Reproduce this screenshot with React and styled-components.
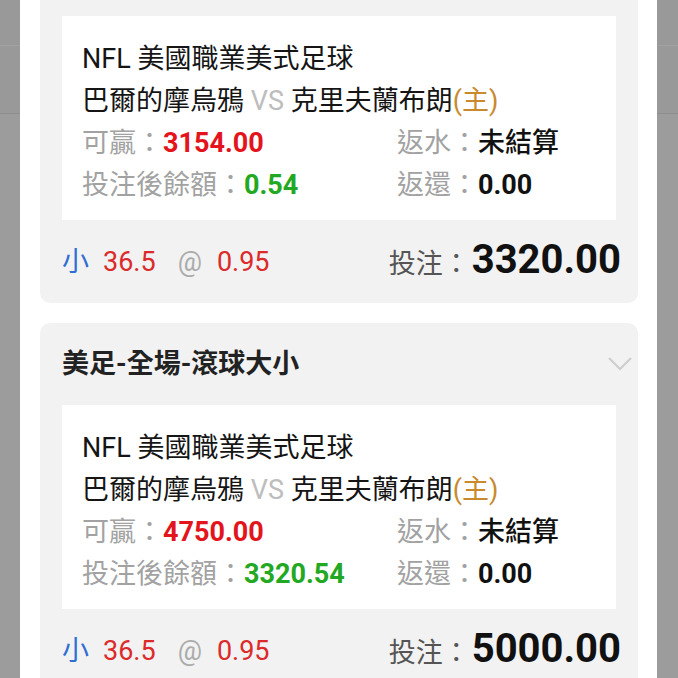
import React from "react";
import styled, { createGlobalStyle } from "styled-components";

const GlobalStyle = createGlobalStyle`
  html, body {
    margin: 0;
    padding: 0;
    height: 678px;
    overflow: hidden;
  }
  body {
    font-family: Roboto, "Noto Sans CJK TC", "Noto Sans", sans-serif;
  }
`;

const bets = [
  { market: "美足-全場-滾球大小", win: "3154.00", balance: "0.54", stake: "3320.00" },
  { market: "美足-全場-滾球大小", win: "4750.00", balance: "3320.54", stake: "5000.00" },
];

const App = () => (
  <>
    <GlobalStyle />
    <Backdrop>
      <Side />
      <Sheet>
        <List>
          {bets.map((bet, i) => (
            <BetCard key={i} bet={bet} />
          ))}
        </List>
      </Sheet>
      <Side />
    </Backdrop>
  </>
);
export default App;

const BetCard = ({ bet }) => (
  <Card>
    <CardHeader>
      <span>{bet.market}</span>
      <svg width="24" height="14" viewBox="0 0 24 14">
        <polyline points="1,1 12,12 23,1" fill="none" stroke="#cccccc" strokeWidth="2" />
      </svg>
    </CardHeader>
    <Detail>
      <Line>NFL 美國職業美式足球</Line>
      <Line>
        巴爾的摩烏鴉 <Muted>VS</Muted> 克里夫蘭布朗<Home>(主)</Home>
      </Line>
      <Stats>
        <Line>
          <Label>可贏：</Label>
          <Value $color="#e3141c">{bet.win}</Value>
        </Line>
        <Line>
          <Label>返水：</Label>
          <Value $weight={500}>未結算</Value>
        </Line>
        <Line>
          <Label>投注後餘額：</Label>
          <Value $color="#22a822">{bet.balance}</Value>
        </Line>
        <Line>
          <Label>返還：</Label>
          <Value>0.00</Value>
        </Line>
      </Stats>
    </Detail>
    <Footer>
      <Pick>
        <Side2>小</Side2>
        <Odds>36.5</Odds>
        <At>@</At>
        <Odds>0.95</Odds>
      </Pick>
      <Stake>
        <StakeLabel>投注：</StakeLabel>
        <StakeAmount>{bet.stake}</StakeAmount>
      </Stake>
    </Footer>
  </Card>
);

const Backdrop = styled.div`
  display: grid;
  grid-template-columns: 20px 1fr 21px;
  height: 678px;
  background: #999;
`;

const Side = styled.div`
  background:
    linear-gradient(#a2a2a2, #a2a2a2) 0 45px / 100% 1px no-repeat,
    linear-gradient(#8e8e8e, #8e8e8e) 0 113px / 100% 1px no-repeat,
    linear-gradient(#9c9c9c, #9c9c9c) 0 114px / 100% 100% no-repeat,
    #999;
`;

const Sheet = styled.div`
  background: #fff;
  overflow: hidden;
  padding: 0 19px 0 20px;
`;

const List = styled.div`
  display: flex;
  flex-direction: column;
  gap: 20px;
  margin-top: -66px;
`;

const Card = styled.div`
  background: #f2f2f2;
  border-radius: 10px;
  padding: 0 22px;
`;

const CardHeader = styled.div`
  height: 82px;
  display: flex;
  align-items: center;
  justify-content: space-between;
  margin-right: -16px;
  font-size: 27px;
  font-weight: 700;
  color: #222;
  span {
    padding-bottom: 6px;
  }
`;

const Detail = styled.div`
  background: #fff;
  padding: 22px 20px 14px;
  font-size: 27px;
  color: #151515;
`;

const Line = styled.div`
  line-height: 42px;
  white-space: nowrap;
`;

const Muted = styled.span`
  color: #bdbdbd;
`;

const Home = styled.span`
  color: #c98a2e;
`;

const Stats = styled.div`
  display: grid;
  grid-template-columns: 315px 1fr;
`;

const Label = styled.span`
  color: #a2a2a2;
`;

const Value = styled.span`
  color: ${(p) => p.$color || "#111"};
  font-weight: ${(p) => p.$weight || 700};
`;

const Footer = styled.div`
  height: 83px;
  display: flex;
  align-items: center;
  justify-content: space-between;
  margin-right: -5px;
  padding-bottom: 4px;
  box-sizing: border-box;
`;

const Pick = styled.div`
  display: flex;
  align-items: baseline;
  font-size: 27px;
`;

const Side2 = styled.span`
  color: #2f6fd3;
  margin-right: 14px;
`;

const Odds = styled.span`
  color: #dc2a2a;
`;

const At = styled.span`
  color: #ababab;
  margin: 0 15px 0 22px;
`;

const Stake = styled.div`
  display: flex;
  align-items: baseline;
`;

const StakeLabel = styled.span`
  font-size: 27px;
  color: #555;
  margin-right: 2px;
`;

const StakeAmount = styled.span`
  font-size: 40px;
  font-weight: 700;
  color: #111;
`;
